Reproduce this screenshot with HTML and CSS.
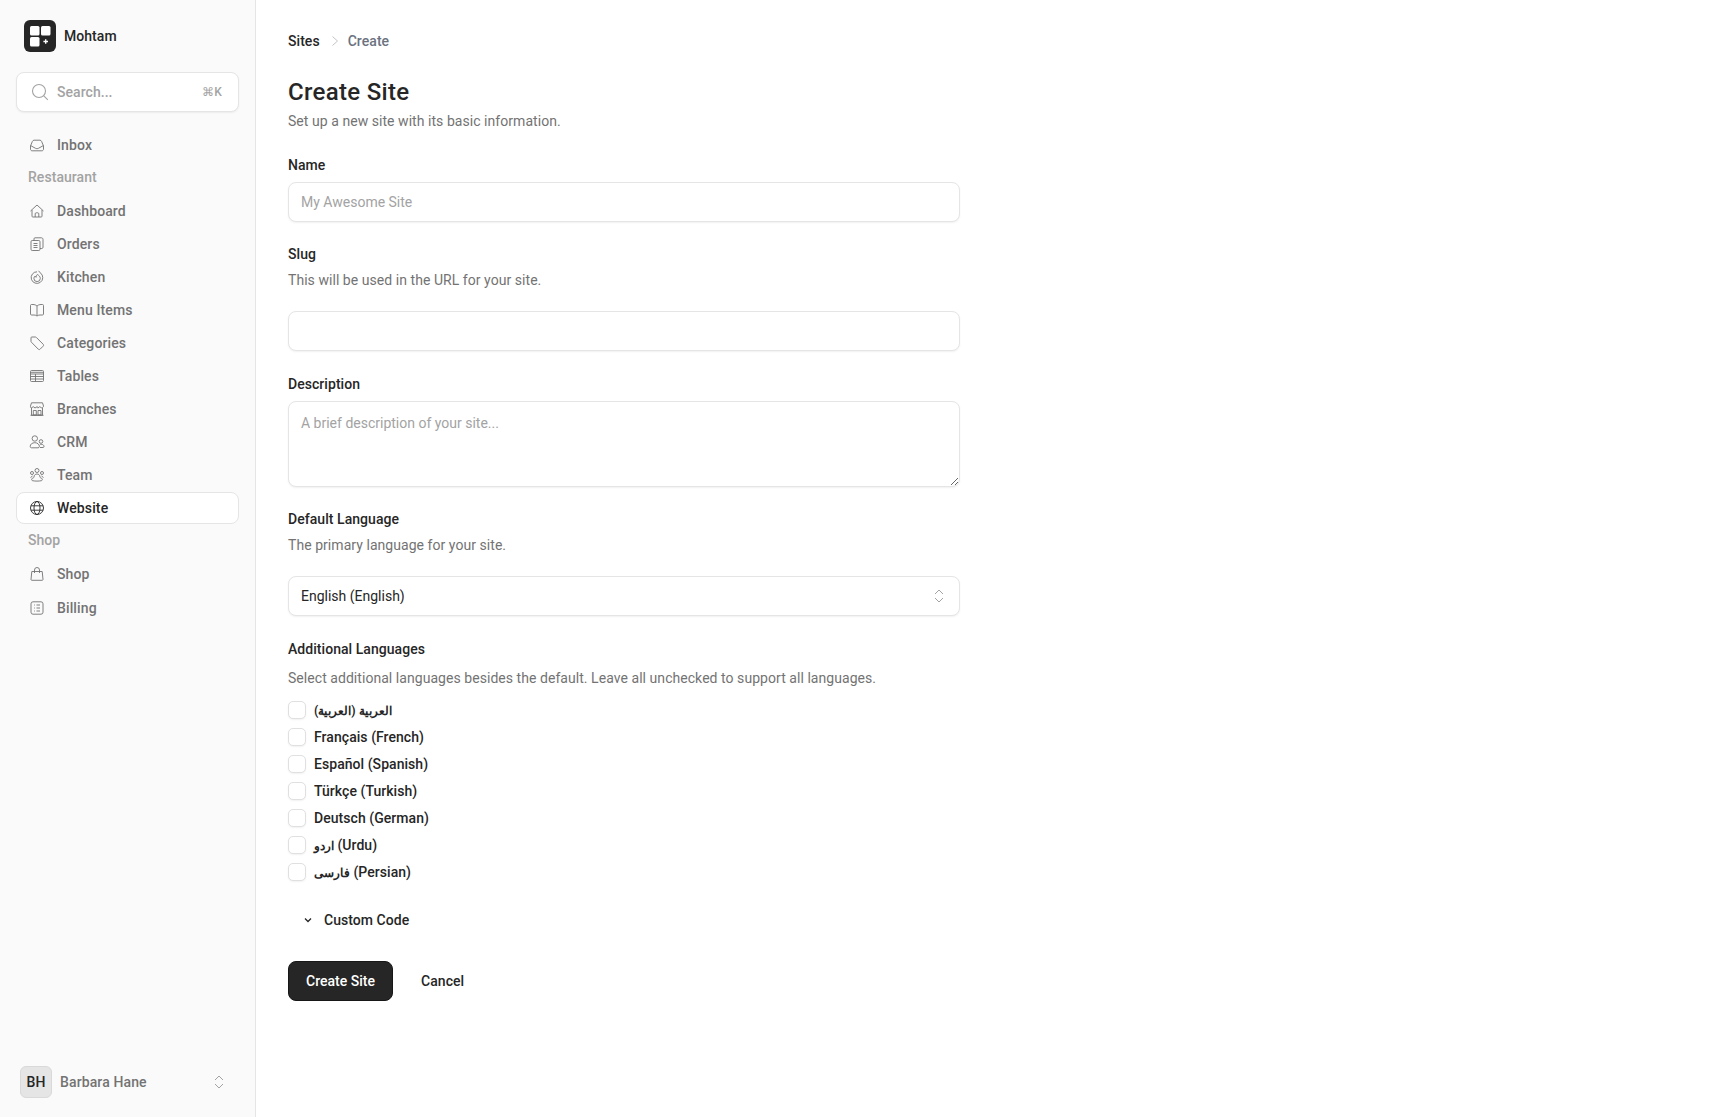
FILE: index.html
```html
<!DOCTYPE html>
<html lang="en">
<head>
	<meta charset="utf-8">
	<title>Create Site</title>
	<link rel="stylesheet" href="styles.css">
</head>
<body>
<div class="app">
	<aside class="sidebar">
		<div class="brand">
			<svg class="logo" viewBox="0 0 32 32" width="32" height="32">
				<rect width="32" height="32" rx="6" fill="#262626"/>
				<rect x="6" y="6" width="9.5" height="9.5" rx="1.5" fill="#fff"/>
				<rect x="17" y="6" width="9.5" height="9.5" rx="1.5" fill="#fff"/>
				<rect x="6" y="17" width="9.5" height="9.5" rx="1.5" fill="#fff"/>
				<path d="M21.7 19.2v4.6M19.4 21.5H24" stroke="#fff" stroke-width="1.4"/>
			</svg>
			<span class="brand_name">Mohtam</span>
		</div>
		<div class="search">
			<svg class="icon_search" viewBox="0 0 18 18" width="18" height="18"><circle cx="8" cy="8" r="6.5"/><path d="M12.8 12.8l4 4"/></svg>
			<span class="search_text">Search...</span>
			<span class="search_key">⌘K</span>
		</div>
		<nav class="nav">
			<a class="nav_item"><svg class="icon" viewBox="0 0 16 16"><path d="M1.5 9v3.2c0 .9.7 1.6 1.6 1.6h9.8c.9 0 1.6-.7 1.6-1.6V9l-1.9-4.6c-.3-.7-.9-1.2-1.7-1.2H5.1c-.8 0-1.4.5-1.7 1.2z"/><path d="M1.7 8.6l4.6 2.6c1.1.6 2.3.6 3.4 0l4.6-2.6"/></svg>Inbox</a>
			<div class="nav_label">Restaurant</div>
			<a class="nav_item"><svg class="icon" viewBox="0 0 16 16"><path d="M1.5 8L8 2l6.500 6"/><path d="M3 7v6.200c0 .5.300.8.800.8h8.400c.5 0 .8-.3.800-.8V7"/><path d="M6.200 14v-3.200c0-.6.400-1 1-1h1.600c.6 0 1 .4 1 1V14"/></svg>Dashboard</a>
			<a class="nav_item"><svg class="icon" viewBox="0 0 16 16"><rect x="2" y="4.500" width="9" height="10" rx="1.200"/><path d="M5 4.500V2.800c0-.6.400-1 1-1h6.500c.8 0 1.500.7 1.500 1.500v8c0 .7-.5 1.200-1.200 1.200H11"/><path d="M4.500 7.500h4M4.500 9.500h4M4.500 11.500h4"/></svg>Orders</a>
			<a class="nav_item"><svg class="icon" viewBox="0 0 16 16"><path d="M8 2.800a5.800 5.800 0 1 0 3.500 1.200L9.500 1.800"/><path d="M8.300 5.500c1.800 1 3 2.300 3 3.900a3.200 3.200 0 0 1-6.400 0c0-1 .5-1.700 1.200-2.300.2.700.6 1 1.100 1.200 0-1 .1-1.900 1.100-2.800z"/></svg>Kitchen</a>
			<a class="nav_item"><svg class="icon" viewBox="0 0 16 16"><path d="M8 4c-1-1-2.500-1.500-4-1.500H2.500c-.6 0-1 .4-1 1v8.500c0 .6.400 1 1 1H5c1.300 0 2.300.4 3 1 .7-.6 1.700-1 3-1h2.500c.6 0 1-.4 1-1V3.500c0-.6-.4-1-1-1H12c-1.500 0-3 .5-4 1.500z"/><path d="M8 4v9.500"/></svg>Menu Items</a>
			<a class="nav_item"><svg class="icon" viewBox="0 0 16 16"><path d="M2 2.800v3.400c0 .4.100.7.400 1l6.800 6.900c.6.600 1.500.6 2 0l2.900-2.900c.6-.6.600-1.500 0-2L7.300 2.400c-.3-.3-.6-.4-1-.4H2.800c-.5 0-.8.300-.8.800z"/></svg>Categories</a>
			<a class="nav_item"><svg class="icon" viewBox="0 0 16 16"><rect x="1.500" y="2.500" width="13" height="11" rx="1"/><path d="M1.500 4.300h13M1.500 6h13M1.500 8.500h13M1.500 11h13M6.500 6v7.500"/></svg>Tables</a>
			<a class="nav_item"><svg class="icon" viewBox="0 0 16 16"><path d="M2.500 1.800h11l1 3.200c0 1-.9 1.800-1.800 1.800s-1.700-.6-1.900-1.300c-.2.700-1 1.300-1.900 1.300S8.200 6.200 8 5.500c-.2.700-1 1.300-1.900 1.300s-1.700-.6-1.900-1.300c-.2.700-1 1.300-1.900 1.300S1.500 6 1.500 5z"/><path d="M2.500 7v7.200h11V7M1.500 14.300h13"/><path d="M4.300 14V9.500h3V14zM9 14V9.500h3V14z"/></svg>Branches</a>
			<a class="nav_item"><svg class="icon" viewBox="0 0 16 16"><circle cx="5.800" cy="4.500" r="2.700"/><circle cx="12" cy="7.500" r="1.800"/><path d="M1.200 12.500c0-2.300 2-3.800 4.600-3.800 1.300 0 2.500.4 3.300 1.100.9.700 1.300 1.600 1.300 2.700 0 .8-.6 1.300-1.300 1.300H2.500c-.7 0-1.300-.5-1.300-1.300z"/><path d="M11 10.500c.4-.2.800-.2 1.200-.2 1.600 0 2.800 1 2.800 2.200 0 .6-.4 1-1 1h-3"/></svg>CRM</a>
			<a class="nav_item"><svg class="icon" viewBox="0 0 16 16"><circle cx="8" cy="3.500" r="2"/><circle cx="3" cy="6" r="1.500"/><circle cx="13" cy="6" r="1.500"/><path d="M5 10c0-1.800 1.300-3 3-3s3 1.200 3 3c0 .7 1 1 1.800 1.400.9.400.7 2.100-.4 2.300-1.500.3-2.900.4-4.400.4s-2.900-.1-4.400-.4c-1.100-.2-1.300-1.900-.4-2.300C4 11 5 10.700 5 10z"/><path d="M1.500 10.500l2-1.500M14.500 10.500l-2-1.500"/></svg>Team</a>
			<a class="nav_item active"><svg class="icon" viewBox="0 0 16 16"><circle cx="8" cy="8" r="6.500"/><ellipse cx="8" cy="8" rx="3" ry="6.500"/><path d="M2 5.800h12M2 10.200h12"/></svg>Website</a>
			<div class="nav_label">Shop</div>
			<a class="nav_item"><svg class="icon" viewBox="0 0 16 16"><path d="M2.800 5.500h10.400l.8 8c0 .5-.3.800-.8.800H2.800c-.5 0-.8-.3-.8-.8z"/><path d="M5.500 7V4a2.500 2.500 0 0 1 5 0v3"/></svg>Shop</a>
			<a class="nav_item nav_last"><svg class="icon" viewBox="0 0 16 16"><rect x="2" y="1.800" width="12" height="12.400" rx="2"/><path d="M5 5h.8M5 8h.8M5 11h.8M7.500 5H11M7.500 8H11M7.500 11H11"/></svg>Billing</a>
		</nav>
		<div class="user">
			<span class="avatar">BH</span>
			<span class="user_name">Barbara Hane</span>
			<svg class="updown" viewBox="0 0 12 16" width="12" height="16"><path d="M2 6l4-4 4 4M2 10l4 4 4-4"/></svg>
		</div>
	</aside>
	<main class="main">
		<div class="crumbs">
			<span class="crumb_first">Sites</span>
			<svg class="crumb_sep" viewBox="0 0 10 12" width="10" height="12"><path d="M2.500 1.500L7.500 6l-5 4.500"/></svg>
			<span class="crumb_last">Create</span>
		</div>
		<h1 class="titulo">Create Site</h1>
		<p class="subtitulo">Set up a new site with its basic information.</p>
		<form class="form">
			<div class="field field_name">
				<label class="label">Name</label>
				<input class="input" type="text" placeholder="My Awesome Site">
			</div>
			<div class="field">
				<label class="label">Slug</label>
				<p class="help">This will be used in the URL for your site.</p>
				<input class="input" type="text">
			</div>
			<div class="field field_desc">
				<label class="label">Description</label>
				<textarea class="input textarea" placeholder="A brief description of your site..."></textarea>
			</div>
			<div class="field">
				<label class="label">Default Language</label>
				<p class="help">The primary language for your site.</p>
				<div class="select_wrap">
					<select class="input select"><option>English (English)</option></select>
					<svg class="updown select_icon" viewBox="0 0 12 16" width="12" height="16"><path d="M2 6l4-4 4 4M2 10l4 4 4-4"/></svg>
				</div>
			</div>
			<div class="field field_langs">
				<label class="label">Additional Languages</label>
				<p class="help help_langs">Select additional languages besides the default. Leave all unchecked to support all languages.</p>
				<div class="checks">
					<label class="check"><input type="checkbox"><span class="ar">العربية (العربية)</span></label>
					<label class="check"><input type="checkbox"><span>Français (French)</span></label>
					<label class="check"><input type="checkbox"><span>Español (Spanish)</span></label>
					<label class="check"><input type="checkbox"><span>Türkçe (Turkish)</span></label>
					<label class="check"><input type="checkbox"><span>Deutsch (German)</span></label>
					<label class="check"><input type="checkbox"><span><span class="ar">اردو</span> (Urdu)</span></label>
					<label class="check"><input type="checkbox"><span><span class="ar">فارسی</span> (Persian)</span></label>
				</div>
			</div>
			<div class="custom">
				<svg class="custom_icon" viewBox="0 0 12 12" width="12" height="12"><path d="M3 4.500L6 7.500l3-3"/></svg>
				Custom Code
			</div>
			<div class="actions">
				<button class="btn" type="button">Create Site</button>
				<a class="cancel">Cancel</a>
			</div>
		</form>
	</main>
</div>
</body>
</html>
```
FILE: styles.css
```css
* {
	box-sizing: border-box;
}

body {
	margin: 0;
	font-family: Roboto, "Noto Sans", sans-serif;
	font-size: 14px;
	letter-spacing: .05px;
	color: #262626;
	background: #fff;
}

.app {
	display: flex;
	height: 1117px;
	overflow: hidden;
}

/* sidebar */
.sidebar {
	width: 256px;
	flex: none;
	display: flex;
	flex-direction: column;
	padding: 20px 16px 0 16px;
	background: #fafafa;
	border-right: 1px solid #e5e5e5;
}

.brand {
	display: flex;
	align-items: center;
	gap: 8px;
	padding-left: 8px;
	height: 32px;
}

.brand_name {
	font-weight: 500;
	font-size: 14px;
}

.search {
	display: flex;
	align-items: center;
	height: 40px;
	margin-top: 20px;
	padding: 0 16px 0 15px;
	background: #fff;
	border: 1px solid #e5e5e5;
	border-radius: 8px;
	box-shadow: 0 1px 2px rgba(0,0,0,.06);
}

.icon_search {
	fill: none;
	stroke: #a3a3a3;
	stroke-width: 1.1;
	margin-left: -1px;
	margin-right: 8px;
}

.search_text {
	flex: 1;
	color: #a3a3a3;
	font-weight: 500;
}

.search_key {
	color: #a3a3a3;
	font-size: 12px;
	font-weight: 500;
}

.nav {
	display: flex;
	flex-direction: column;
	gap: 1px;
	margin-top: 17px;
}

.nav_item {
	display: flex;
	align-items: center;
	gap: 12px;
	height: 32px;
	padding: 0 12px;
	border: 1px solid transparent;
	border-radius: 8px;
	color: #737373;
	font-weight: 500;
	letter-spacing: .12px;
}

.nav_item.active {
	background: #fff;
	border-color: #e5e5e5;
	color: #262626;
}

.nav_last {
	margin-top: 1px;
}

.icon {
	width: 16px;
	height: 16px;
	flex: none;
	fill: none;
	stroke: currentColor;
	stroke-width: .9;
}

.nav_label {
	height: 32px;
	line-height: 31px;
	padding-left: 12px;
	color: #a3a3a3;
	font-weight: 500;
}

.user {
	display: flex;
	align-items: center;
	margin-top: auto;
	margin-bottom: 19px;
	padding-left: 4px;
	height: 33px;
}

.avatar {
	width: 32px;
	height: 32px;
	display: flex;
	align-items: center;
	justify-content: center;
	background: #e5e5e5;
	border: 1px solid #d9d9d9;
	border-radius: 6px;
	font-weight: 500;
	color: #262626;
}

.user_name {
	flex: 1;
	margin-left: 8px;
	color: #737373;
	font-weight: 500;
	letter-spacing: .12px;
}

.updown {
	fill: none;
	stroke: #a3a3a3;
	stroke-width: 1;
	margin-right: 14px;
}

/* content */
.main {
	flex: 1;
	padding: 32px 32px 0 32px;
}

.crumbs {
	display: flex;
	align-items: center;
	height: 18px;
	font-weight: 500;
}

.crumb_first {
	color: #262626;
}

.crumb_sep {
	margin: 0 8px 0 10px;
	fill: none;
	stroke: #c4c4c4;
	stroke-width: 1;
}

.crumb_last {
	color: #6b7280;
}

.titulo {
	margin: 26px 0 0 0;
	font-size: 24px;
	line-height: 32px;
	font-weight: 500;
	letter-spacing: .3px;
	color: #262626;
}

.subtitulo {
	margin: 3px 0 0 0;
	line-height: 20px;
	color: #737373;
}

.form {
	width: 672px;
	display: flex;
	flex-direction: column;
	margin-top: 24px;
}

.field {
	margin-top: 22px;
}

.field_name {
	margin-top: 0;
}

.field_desc {
	margin-top: 23px;
}

.field_langs {
	margin-top: 23px;
}

.label {
	display: block;
	line-height: 20px;
	font-weight: 500;
	margin-bottom: 7px;
}

.help {
	margin: 0 0 21px 0;
	line-height: 20px;
	color: #737373;
}

.label + .help {
	margin-top: -1px;
}

.label + .help_langs {
	margin-top: 9px;
	margin-bottom: 12px;
}

.input {
	display: block;
	width: 100%;
	height: 40px;
	padding: 0 12px;
	border: 1px solid #e5e5e5;
	border-radius: 8px;
	background: #fff;
	box-shadow: 0 1px 2px rgba(0,0,0,.06);
	font: inherit;
	color: #262626;
	outline: none;
}

.input::placeholder {
	color: #a3a3a3;
}

.textarea {
	height: 86px;
	padding: 11px 12px;
	line-height: 20px;
}

.select_wrap {
	position: relative;
}

.select {
	appearance: none;
}

.select_icon {
	position: absolute;
	right: 1px;
	top: 12px;
}

.checks {
	display: flex;
	flex-direction: column;
	gap: 7px;
}

.check {
	display: flex;
	align-items: center;
	gap: 8px;
	height: 20px;
	font-weight: 500;
}

.check input {
	appearance: none;
	width: 18px;
	height: 18px;
	margin: 0;
	background: #fff;
	border: 1px solid #e0e0e0;
	border-radius: 5px;
	box-shadow: 0 1px 2px rgba(0,0,0,.06);
}

.ar {
	font-size: 12.4px;
	font-weight: 600;
}

.custom {
	display: flex;
	align-items: center;
	gap: 10px;
	margin-top: 28px;
	padding-left: 14px;
	height: 20px;
	font-weight: 500;
}

.custom_icon {
	fill: none;
	stroke: #262626;
	stroke-width: 1.300;
}

.actions {
	display: flex;
	align-items: center;
	gap: 28px;
	margin-top: 31px;
}

.btn {
	width: 105px;
	height: 40px;
	border: 1px solid #171717;
	border-radius: 8px;
	background: #262626;
	color: #fff;
	font: inherit;
	font-weight: 500;
}

.cancel {
	font-weight: 500;
}
```
